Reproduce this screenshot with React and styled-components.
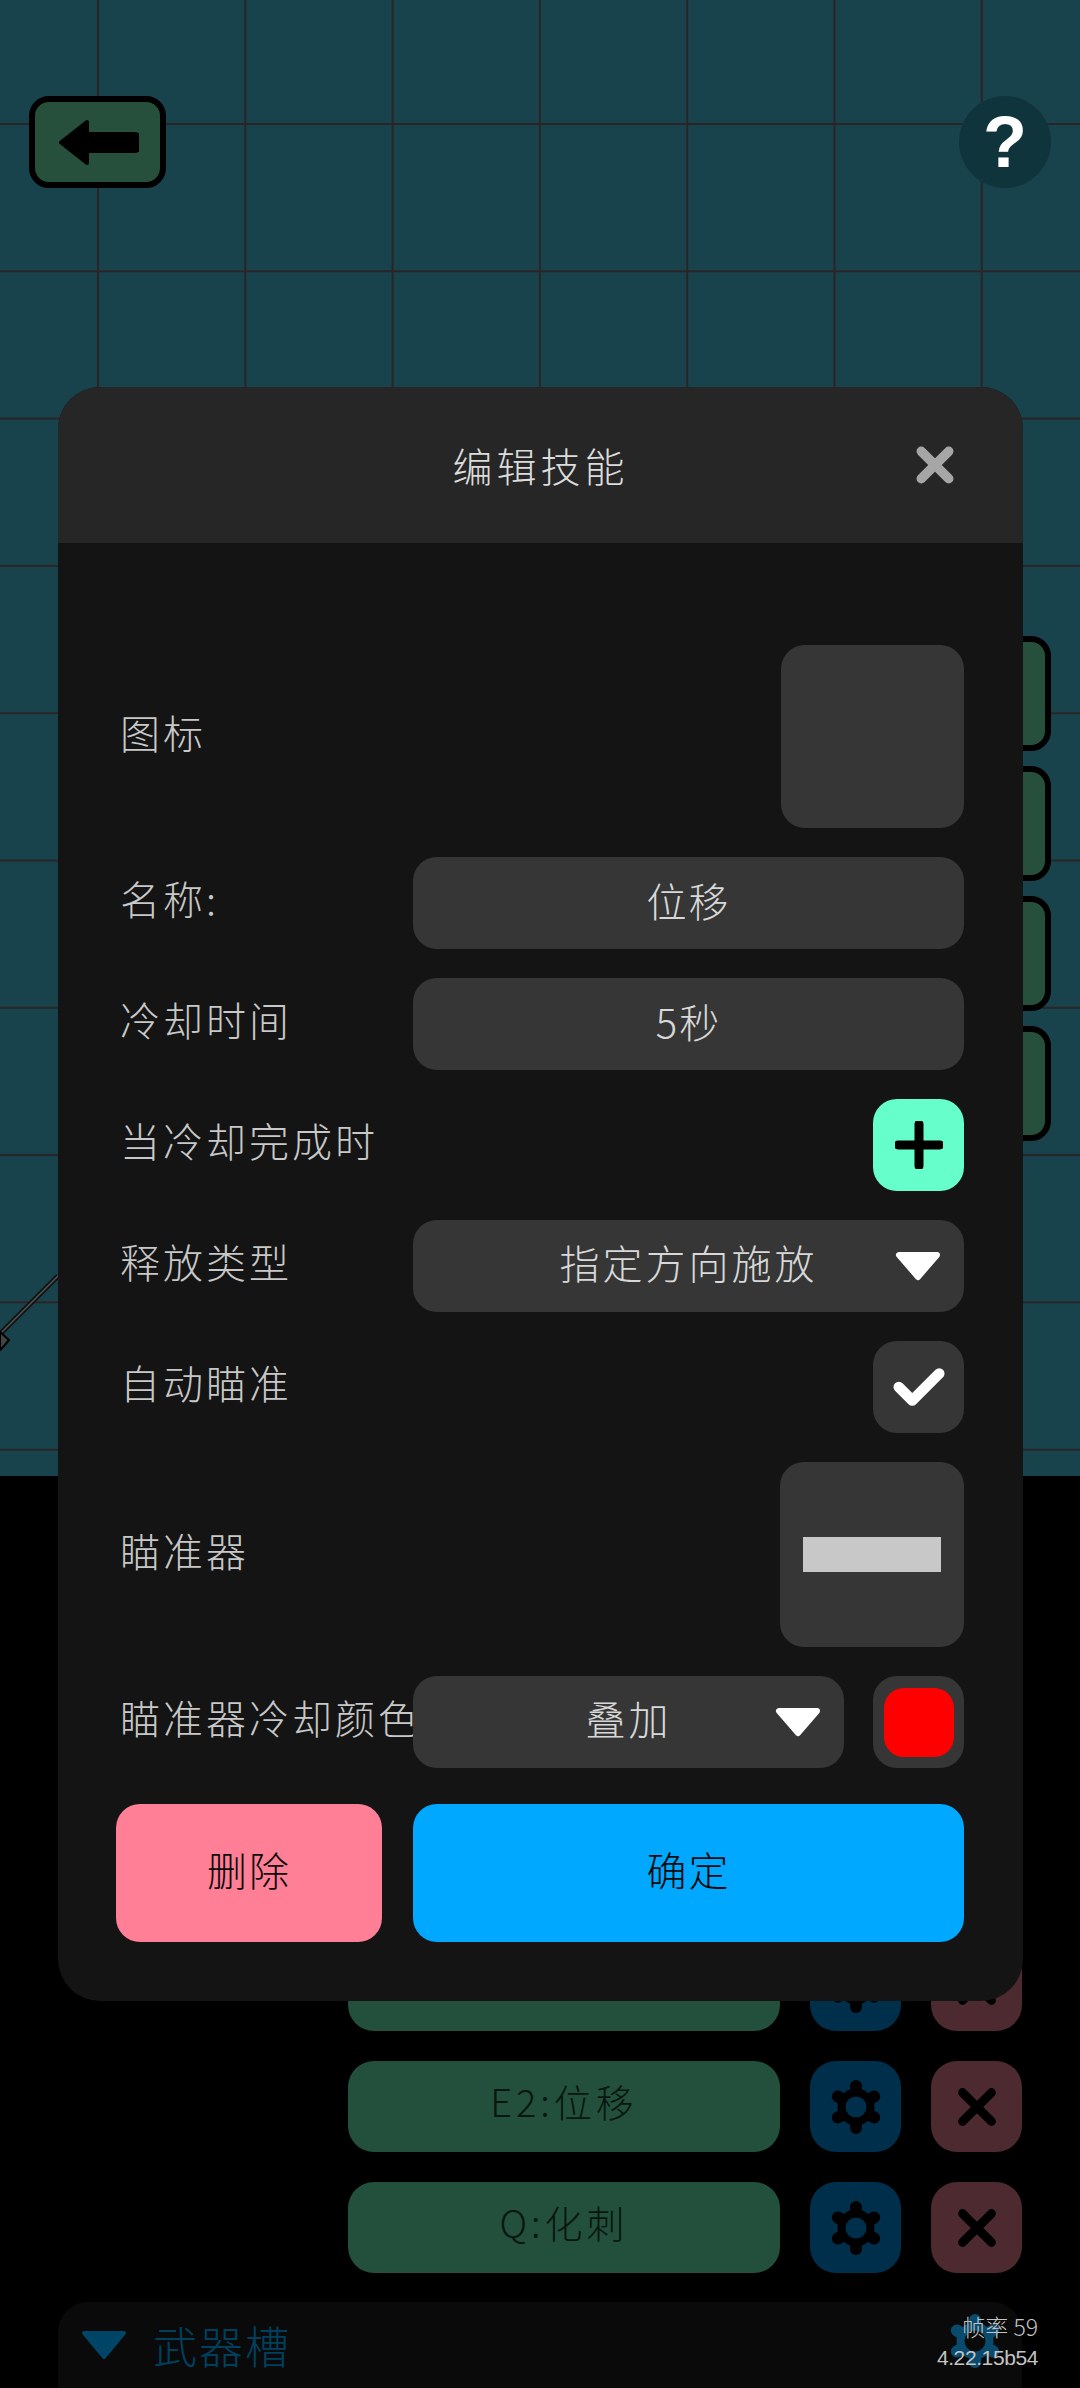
import React from "react";
import styled, { createGlobalStyle } from "styled-components";

const GlobalStyle = createGlobalStyle`
  html, body {
    margin: 0;
    padding: 0;
    background: #000;
  }
  body {
    font-family: "Noto Sans CJK SC", "Noto Sans", sans-serif;
    font-weight: 300;
  }
`;

const Screen = styled.div`
  position: relative;
  width: 1080px;
  height: 2388px;
  overflow: hidden;
  background: #000;
  display: flex;
  flex-direction: column;
`;

const Scene = styled.section`
  position: relative;
  box-sizing: border-box;
  height: 1477px;
  padding: 96px 29px 0;
  background-color: #18434c;
  background-image: linear-gradient(to right, #2a2427 2px, transparent 2px),
    linear-gradient(to bottom, #2a2427 2px, transparent 2px);
  background-size: 147.3px 147.3px;
  background-position: 97px 123px;
`;

const TopBar = styled.div`
  display: flex;
  justify-content: space-between;
  align-items: center;
`;

const BackButton = styled.div`
  box-sizing: border-box;
  width: 137px;
  height: 92px;
  display: flex;
  align-items: center;
  justify-content: center;
  background: #27503c;
  border: 6px solid #000;
  border-radius: 20px;
`;

const HelpButton = styled.div`
  width: 92px;
  height: 92px;
  border-radius: 50%;
  background: #10343c;
  color: #fff;
  display: flex;
  align-items: center;
  justify-content: center;
  font-family: "Liberation Sans", sans-serif;
  font-weight: 700;
  font-size: 72px;
  line-height: 1;
`;

const SlotColumn = styled.div`
  display: flex;
  flex-direction: column;
  align-items: flex-end;
  gap: 15px;
  margin-top: 448px;
`;

const Slot = styled.div`
  box-sizing: border-box;
  width: 180px;
  height: 115px;
  background: #27503c;
  border: 6px solid #000;
  border-radius: 20px;
`;

const AimLine = styled.svg`
  position: absolute;
  left: 0;
  top: 1270px;
`;

const SkillList = styled.section`
  box-sizing: border-box;
  flex: 1;
  display: flex;
  flex-direction: column;
  gap: 30px;
  padding: 464px 58px 0 348px;
`;

const SkillRow = styled.div`
  display: flex;
  gap: 30px;
  height: 91px;
`;

const SkillName = styled.div`
  flex: 1;
  display: flex;
  align-items: center;
  justify-content: center;
  padding-bottom: 12px;
  box-sizing: border-box;
  background: #22503c;
  border-radius: 26px;
  color: #08160f;
  font-size: 38px;
  letter-spacing: 4px;
`;

const SkillAction = styled.div`
  width: 91px;
  display: flex;
  align-items: center;
  justify-content: center;
  border-radius: 26px;
  background: ${(p) => p.$bg};
`;

const WeaponBar = styled.section`
  box-sizing: border-box;
  height: 86px;
  margin: 29px 58px 0;
  padding: 0 17px 0 23px;
  display: flex;
  align-items: center;
  gap: 26px;
  background: #0a0a0a;
  border-radius: 30px 30px 0 0;
  color: #00405f;
  font-size: 44px;
  letter-spacing: 2px;
`;

const WeaponGear = styled.div`
  display: flex;
  margin: -8px 0 0 auto;
`;

const Stats = styled.div`
  position: absolute;
  right: 42px;
  bottom: 15px;
  color: #c4c4c4;
  text-align: right;
  font-size: 23px;
  line-height: 31px;
`;

const StatsBuild = styled.div`
  font-family: "Liberation Sans", sans-serif;
  font-size: 21px;
  letter-spacing: -0.4px;
`;

const Modal = styled.section`
  position: absolute;
  left: 58px;
  top: 387px;
  width: 965px;
  height: 1614px;
  overflow: hidden;
  background: #141414;
  border-radius: 42px;
`;

const ModalHeader = styled.header`
  box-sizing: border-box;
  height: 156px;
  padding: 0 69px;
  display: grid;
  grid-template-columns: 1fr auto 1fr;
  align-items: center;
  background: #262626;
`;

const ModalTitle = styled.h2`
  grid-column: 2;
  margin: 0;
  color: #dcdcdc;
  font-size: 40px;
  font-weight: 300;
  letter-spacing: 4px;
`;

const CloseIcon = styled.svg`
  justify-self: end;
`;

const ModalBody = styled.div`
  padding: 102px 59px 59px 58px;
  display: flex;
  flex-direction: column;
  gap: 29px;
`;

const Row = styled.div`
  display: flex;
  align-items: center;
  justify-content: space-between;
  height: ${(p) => p.$height || 92}px;
`;

const Label = styled.div`
  flex: 0 0 297px;
  overflow: hidden;
  white-space: nowrap;
  padding-left: 4px;
  box-sizing: border-box;
  margin-top: -10px;
  color: #c8c8c8;
  font-size: 40px;
  letter-spacing: 3px;
`;

const Field = styled.div`
  flex: 1;
  height: 100%;
  box-sizing: border-box;
  padding-bottom: 6px;
  display: flex;
  align-items: center;
  justify-content: center;
  background: #363636;
  border-radius: 24px;
  color: #d8d8d8;
  font-size: 40px;
  letter-spacing: 2px;
`;

const Select = styled(Field)`
  display: grid;
  grid-template-columns: 1fr auto 1fr;
  padding: 0 23px;
`;

const SelectValue = styled.span`
  grid-column: 2;
  margin-top: -8px;
  letter-spacing: 3px;
`;

const SelectArrow = styled.svg`
  justify-self: end;
`;

const SquareButton = styled.div`
  flex: none;
  width: ${(p) => p.$size || 91}px;
  height: 100%;
  display: flex;
  align-items: center;
  justify-content: center;
  background: ${(p) => p.$bg || "#363636"};
  border-radius: 24px;
`;

const ColorSwatch = styled.div`
  width: 70px;
  height: 69px;
  background: #ff0000;
  border-radius: 20px;
`;

const AimPreview = styled.div`
  width: 138px;
  height: 35px;
  background: #c8c8c8;
`;

const BlendGroup = styled.div`
  flex: 1;
  height: 100%;
  display: flex;
  gap: 29px;
`;

const Actions = styled.div`
  display: flex;
  gap: 31px;
  margin-top: 7px;
  height: 138px;
`;

const ActionButton = styled.div`
  flex: ${(p) => (p.$grow ? 1 : "0 0 266px")};
  box-sizing: border-box;
  padding-bottom: 8px;
  display: flex;
  align-items: center;
  justify-content: center;
  background: ${(p) => p.$bg};
  border-radius: 24px;
  color: #0a0a0a;
  font-size: 40px;
  letter-spacing: 2px;
`;

const BackArrow = () => (
  <svg width="82" height="49" viewBox="0 0 82 49">
    <path
      d="M4 24.5 L30 4 V16 H77 a2 2 0 0 1 0 17 H30 V45 Z"
      fill="#000"
      stroke="#000"
      strokeWidth="4"
      strokeLinejoin="round"
    />
  </svg>
);

const Cross = ({ size, stroke, color }) => (
  <svg width={size} height={size} viewBox="0 0 36 36">
    <path
      d="M5 5 L31 31 M31 5 L5 31"
      stroke={color}
      strokeWidth={stroke}
      strokeLinecap="round"
      fill="none"
    />
  </svg>
);

const Gear = ({ size = 60, color = "#000" }) => (
  <svg width={size} height={size} viewBox="0 0 60 60">
    <circle cx="30" cy="30" r="14.5" fill="none" stroke={color} strokeWidth="8" />
    {[0, 60, 120, 180, 240, 300].map((a) => (
      <line
        key={a}
        x1="30"
        y1="12.5"
        x2="30"
        y2="9"
        stroke={color}
        strokeWidth="12"
        strokeLinecap="round"
        transform={`rotate(${a} 30 30)`}
      />
    ))}
  </svg>
);

const DownArrow = () => (
  <SelectArrow width="46" height="30" viewBox="0 0 46 30">
    <path
      d="M4 4 H42 L23 26 Z"
      fill="#fff"
      stroke="#fff"
      strokeWidth="6"
      strokeLinejoin="round"
    />
  </SelectArrow>
);

const skills = ["E1:位移", "E2:位移", "Q:化刺"];

export default function App() {
  return (
    <Screen>
      <GlobalStyle />
      <Scene>
        <TopBar>
          <BackButton>
            <BackArrow />
          </BackButton>
          <HelpButton>?</HelpButton>
        </TopBar>
        <SlotColumn>
          <Slot />
          <Slot />
          <Slot />
          <Slot />
        </SlotColumn>
        <AimLine width="60" height="85" viewBox="0 0 60 85">
          <path d="M58 6 L0 64" stroke="#111" strokeWidth="5" />
          <path d="M58 6 L0 64" stroke="#555" strokeWidth="1.5" />
          <path d="M0 62 L9 70 L4 76 L0 80 Z" fill="#444" stroke="#000" strokeWidth="2" />
        </AimLine>
      </Scene>

      <SkillList>
        {skills.map((name) => (
          <SkillRow key={name}>
            <SkillName>{name}</SkillName>
            <SkillAction $bg="#002f4c">
              <Gear />
            </SkillAction>
            <SkillAction $bg="#4d2a30">
              <Cross size={40} stroke={8} color="#000" />
            </SkillAction>
          </SkillRow>
        ))}
      </SkillList>

      <WeaponBar>
        <svg width="46" height="30" viewBox="0 0 46 30">
          <path d="M3 3 H43 L23 27 Z" fill="#004466" stroke="#004466" strokeWidth="4" strokeLinejoin="round" />
        </svg>
        武器槽
        <WeaponGear>
          <Gear size={60} color="#0a4a6c" />
        </WeaponGear>
      </WeaponBar>
      <Stats>
        <div>帧率 59</div>
        <StatsBuild>4.22.15b54</StatsBuild>
      </Stats>

      <Modal>
        <ModalHeader>
          <ModalTitle>编辑技能</ModalTitle>
          <CloseIcon width="38" height="38" viewBox="0 0 36 36">
            <path
              d="M5 5 L31 31 M31 5 L5 31"
              stroke="#a6a6a6"
              strokeWidth="9"
              strokeLinecap="round"
            />
          </CloseIcon>
        </ModalHeader>
        <ModalBody>
          <Row $height={183}>
            <Label>图标</Label>
            <SquareButton $size={183} />
          </Row>
          <Row>
            <Label>名称:</Label>
            <Field>位移</Field>
          </Row>
          <Row>
            <Label>冷却时间</Label>
            <Field>5秒</Field>
          </Row>
          <Row>
            <Label>当冷却完成时</Label>
            <SquareButton $bg="#66ffcc">
              <svg width="48" height="48" viewBox="0 0 48 48">
                <path
                  d="M24 3 V45 M3 24 H45"
                  stroke="#000"
                  strokeWidth="9"
                  strokeLinecap="round"
                />
              </svg>
            </SquareButton>
          </Row>
          <Row>
            <Label>释放类型</Label>
            <Select>
              <SelectValue>指定方向施放</SelectValue>
              <DownArrow />
            </Select>
          </Row>
          <Row>
            <Label>自动瞄准</Label>
            <SquareButton>
              <svg width="52" height="40" viewBox="0 0 54 40">
                <path
                  d="M6 20 L20 34 L48 6"
                  fill="none"
                  stroke="#fff"
                  strokeWidth="11"
                  strokeLinecap="round"
                  strokeLinejoin="round"
                />
              </svg>
            </SquareButton>
          </Row>
          <Row $height={185}>
            <Label>瞄准器</Label>
            <SquareButton $size={184}>
              <AimPreview />
            </SquareButton>
          </Row>
          <Row>
            <Label>瞄准器冷却颜色</Label>
            <BlendGroup>
              <Select>
                <SelectValue>叠加</SelectValue>
                <DownArrow />
              </Select>
              <SquareButton>
                <ColorSwatch />
              </SquareButton>
            </BlendGroup>
          </Row>
          <Actions>
            <ActionButton $bg="#ff7f96">删除</ActionButton>
            <ActionButton $bg="#00a8ff" $grow>
              确定
            </ActionButton>
          </Actions>
        </ModalBody>
      </Modal>
    </Screen>
  );
}
